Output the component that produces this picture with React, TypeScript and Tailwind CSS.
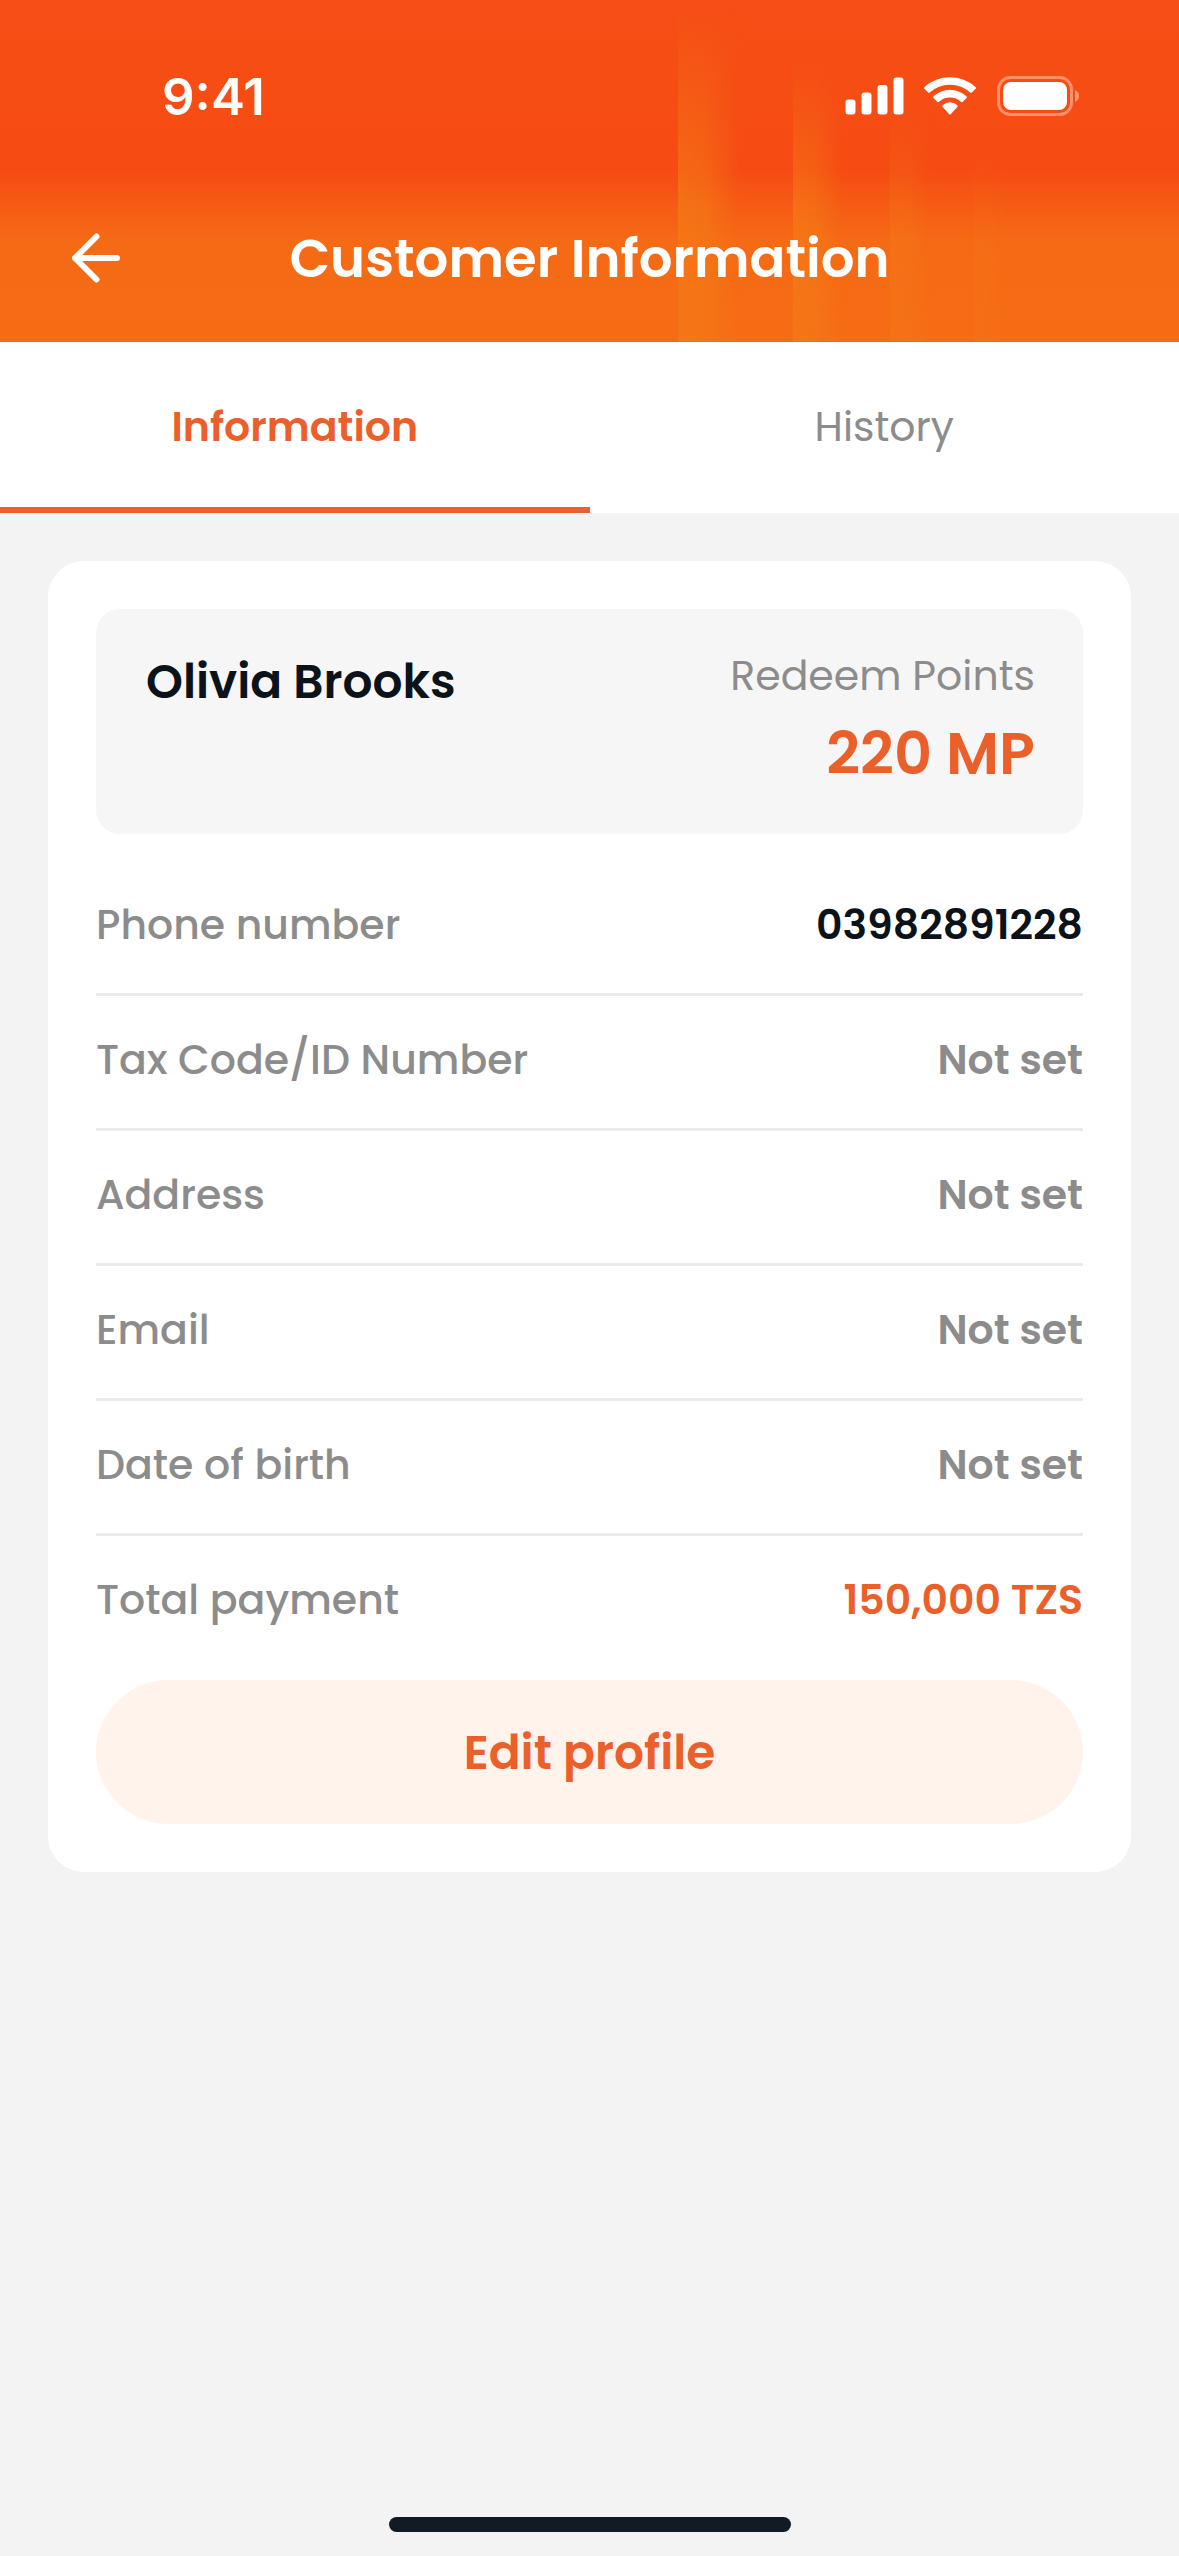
import { useState } from "react";
import clsx from "clsx";

const tabs = ["Information", "History"];

const customer = {
  name: "Olivia Brooks",
  points: "220 MP",
  fields: [
    { label: "Phone number", value: "03982891228", tone: "text-[#0b121a]" },
    { label: "Tax Code/ID Number", value: "Not set", tone: "text-[#8c8c8c]" },
    { label: "Address", value: "Not set", tone: "text-[#8c8c8c]" },
    { label: "Email", value: "Not set", tone: "text-[#8c8c8c]" },
    { label: "Date of birth", value: "Not set", tone: "text-[#8c8c8c]" },
    { label: "Total payment", value: "150,000 TZS", tone: "text-[#eb5f2b]" },
  ],
};

function StatusBar() {
  return (
    <div className="relative flex h-[174px] items-center justify-between pt-[18px] pr-[100px] pl-[162px] text-white">
      <span className="font-['Inter',sans-serif] text-[51px] leading-none font-semibold">9:41</span>
      <div className="flex items-center gap-5">
        <svg width="59" height="38" viewBox="0 0 59 38" fill="currentColor" aria-hidden="true">
          <rect x="0.5" y="22.5" width="10" height="15" rx="3" />
          <rect x="16.5" y="15.5" width="10" height="22" rx="3" />
          <rect x="32.5" y="8" width="10" height="29.5" rx="3" />
          <rect x="48.5" y="0.5" width="10" height="37" rx="3" />
        </svg>
        <svg width="52" height="38" viewBox="0 0 17.15 12.33" fill="currentColor" aria-hidden="true">
          <path d="M8.571 2.466c2.487 0 4.88.922 6.682 2.576a.35.35 0 0 0 .486-.004l1.298-1.263a.345.345 0 0 0-.003-.494c-4.731-4.375-12.195-4.375-16.926 0a.345.345 0 0 0-.003.494l1.298 1.263a.35.35 0 0 0 .486.004 9.87 9.87 0 0 1 6.682-2.576Z" />
          <path d="M8.568 6.687c1.357 0 2.666.511 3.672 1.435a.34.34 0 0 0 .483-.006l1.288-1.32a.37.37 0 0 0-.006-.52c-3.064-2.899-7.808-2.899-10.872 0a.37.37 0 0 0-.005.52l1.287 1.32a.34.34 0 0 0 .483.006 5.42 5.42 0 0 1 3.67-1.435Z" />
          <path d="M11.092 9.48a.4.4 0 0 1-.102.28l-2.177 2.456a.32.32 0 0 1-.483 0L6.153 9.76a.4.4 0 0 1 .011-.556 3.44 3.44 0 0 1 4.815 0 .4.4 0 0 1 .113.276Z" />
        </svg>
        <svg width="83" height="42" viewBox="0 0 83 42" aria-hidden="true">
          <rect x="2.5" y="2.5" width="73" height="37" rx="12" fill="none" stroke="currentColor" strokeWidth="3" opacity="0.38" />
          <path d="M79 15c2.4 1 4 3.300 4 6s-1.600 5-4 6Z" fill="currentColor" opacity="0.42" />
          <rect x="7" y="7" width="64" height="28" rx="8" fill="currentColor" />
        </svg>
      </div>
    </div>
  );
}

// Light beams rising from the bottom edge of the header
function HeaderBeams() {
  return (
    <svg className="absolute inset-y-0 right-0 h-full" width="501" height="342" viewBox="678 0 501 342" aria-hidden="true">
      <defs>
        <linearGradient id="beamColor" x1="0" y1="0" x2="1" y2="0">
          <stop offset="0" stopColor="#f47a16" />
          <stop offset="0.45" stopColor="#f47a16" stopOpacity="0.8" />
          <stop offset="1" stopColor="#f47a16" stopOpacity="0" />
        </linearGradient>
        <linearGradient id="beamFade" x1="0" y1="0" x2="0" y2="1">
          <stop offset="0" stopColor="#fff" stopOpacity="0" />
          <stop offset="0.6" stopColor="#fff" stopOpacity="0.75" />
          <stop offset="1" stopColor="#fff" stopOpacity="0.7" />
        </linearGradient>
        <mask id="beamMask" maskUnits="userSpaceOnUse" x="678" y="0" width="501" height="342">
          <rect x="678" y="5" width="70" height="337" fill="url(#beamFade)" />
          <rect x="793" y="60" width="60" height="282" fill="url(#beamFade)" />
          <rect x="890" y="105" width="50" height="237" fill="url(#beamFade)" opacity="0.6" />
          <rect x="974" y="150" width="40" height="192" fill="url(#beamFade)" opacity="0.35" />
        </mask>
      </defs>
      <g fill="url(#beamColor)" mask="url(#beamMask)">
        <rect x="678" y="0" width="62" height="342" />
        <rect x="793" y="0" width="50" height="342" />
        <rect x="890" y="0" width="42" height="342" />
        <rect x="974" y="0" width="34" height="342" />
      </g>
    </svg>
  );
}

function Header() {
  return (
    <header className="relative overflow-hidden bg-[linear-gradient(to_bottom,#f64e16_0px,#f64c14_172px,#f56a15_240px,#f66c15_342px)]">
      <HeaderBeams />
      <StatusBar />
      <div className="relative grid h-[168px] grid-cols-[72px_1fr_72px] items-center px-[60px] text-white">
        <button type="button" aria-label="Back" className="flex size-[72px] items-center justify-center">
          <svg width="50" height="50" viewBox="0 0 50 50" fill="none" stroke="currentColor" strokeWidth="6" strokeLinecap="round" strokeLinejoin="round" aria-hidden="true">
            <path d="M46 25H4M25.500 3.500 4 25l21.500 21.500" />
          </svg>
        </button>
        <h1 className="pt-0.5 text-center text-[53px] leading-[72px] font-semibold">Customer Information</h1>
      </div>
    </header>
  );
}

export default function App() {
  const [activeTab, setActiveTab] = useState("Information");

  return (
    <div className="flex min-h-screen flex-col bg-[#f3f3f3] font-['Poppins','Inter',sans-serif]">
      <Header />

      {/* Tabs */}
      <div role="tablist" className="grid grid-cols-2 bg-white">
        {tabs.map((tab) => (
          <button
            key={tab}
            type="button"
            role="tab"
            aria-selected={activeTab === tab}
            onClick={() => setActiveTab(tab)}
            className={clsx(
              "h-[171px] border-b-[6px] pt-1 text-[41px]",
              activeTab === tab
                ? "border-[#eb5f2b] font-semibold text-[#eb5f2b]"
                : "border-transparent text-[#8c8c8c]"
            )}
          >
            {tab}
          </button>
        ))}
      </div>

      <main className="flex-1 p-12">
        <section className="rounded-[36px] bg-white p-12">
          {/* Name and points */}
          <div className="flex items-start justify-between rounded-3xl bg-[#f6f6f6] pt-[37px] pr-12 pb-8 pl-[50px]">
            <h2 className="text-[47px] leading-[72px] font-semibold text-[#0b121a]">{customer.name}</h2>
            <div className="text-right">
              <p className="text-[41px] leading-[60px] text-[#8c8c8c]">Redeem Points</p>
              <p className="text-[59px] leading-[96px] font-semibold text-[#eb5f2b]">{customer.points}</p>
            </div>
          </div>

          {/* Details */}
          <dl className="mt-[27px] divide-y-[3px] divide-[#ebebeb] text-[41px] leading-[60px]">
            {customer.fields.map((field) => (
              <div key={field.label} className="flex justify-between pt-[34px] pb-[38px]">
                <dt className="font-medium text-[#8c8c8c]">{field.label}</dt>
                <dd className={clsx("font-semibold", field.tone)}>{field.value}</dd>
              </div>
            ))}
          </dl>

          <button
            type="button"
            className="mt-3 h-36 w-full rounded-full bg-[#fff3ec] pt-0.5 text-[47px] font-semibold text-[#eb5f2b]"
          >
            Edit profile
          </button>
        </section>
      </main>

      {/* Home indicator */}
      <footer className="flex justify-center pb-6">
        <div className="h-[15px] w-[402px] rounded-full bg-[#111b26]" />
      </footer>
    </div>
  );
}
